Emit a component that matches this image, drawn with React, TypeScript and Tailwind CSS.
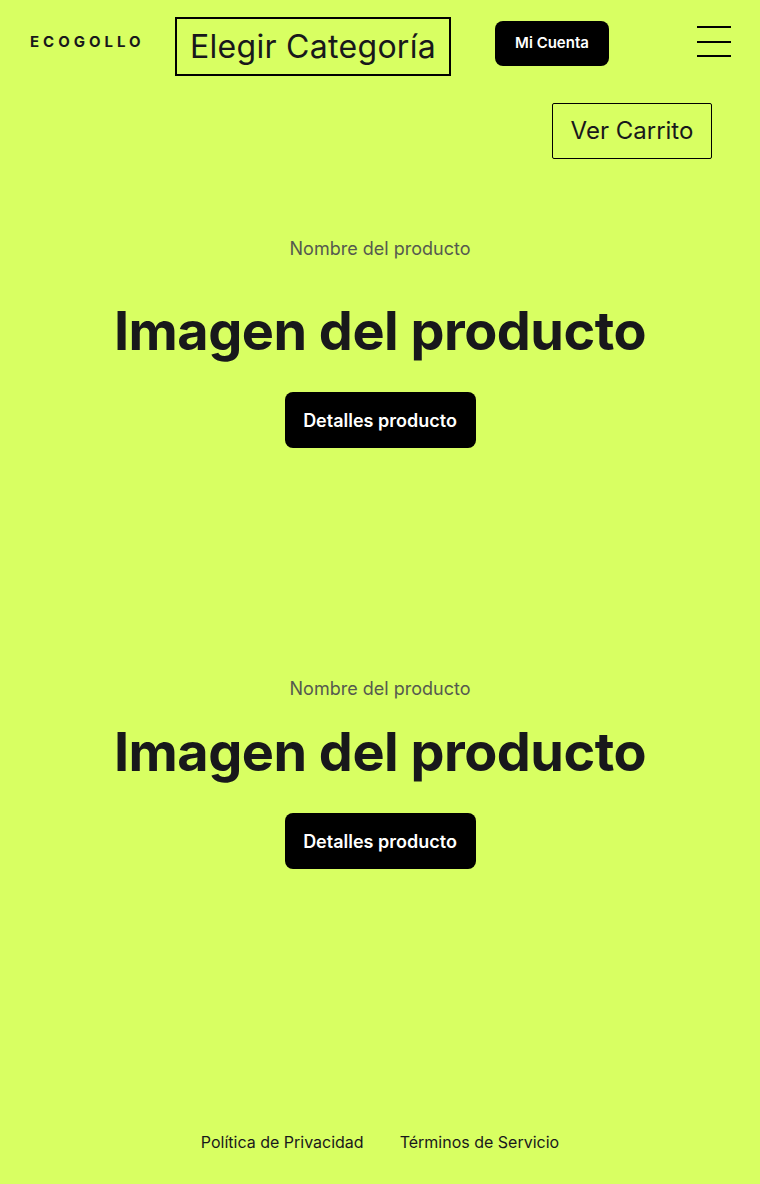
import React from "react";

const jakarta = { fontFamily: '"Inter", "Noto Sans", sans-serif' };

function Product({ top, gapTitle }: { top: string; gapTitle: string }) {
  return (
    <section className={`flex flex-col items-center ${top}`}>
      <p className="text-[18px] leading-[22px] text-[#555a4f]" style={{ fontFamily: '"Inter", sans-serif' }}>
        Nombre del producto
      </p>
      <h2 className={`${gapTitle} text-[54px] leading-[64px] font-bold tracking-[-0.5px] text-[#18181b]`}>
        Imagen del producto
      </h2>
      <button className="mt-[29px] h-[56px] w-[191px] rounded-[8px] bg-black text-[18px] font-semibold text-white">
        Detalles producto
      </button>
    </section>
  );
}

export default function App() {
  return (
    <div className="min-h-[1184px] w-[760px] bg-[#d8ff62] flex flex-col" style={jakarta}>
      <header className="flex items-start pt-[17px]">
        <div className="ml-[30px] mt-[17px] w-[115px] text-[15px] leading-[16px] font-bold tracking-[4px] text-[#18181b] whitespace-nowrap">ECOGOLLO</div>
        <div className="ml-[30px] flex h-[59px] w-[276px] items-center justify-center border-2 border-black text-[32px] tracking-[0.3px] text-[#18181b]">
          Elegir Categoría
        </div>
        <button className="ml-[44px] mt-[4px] h-[45px] w-[114px] rounded-[8px] bg-black text-[15px] font-semibold text-white">
          Mi Cuenta
        </button>
        <div className="ml-[88px] mt-[9px] flex w-[34px] flex-col gap-[12.5px]">
          <span className="block h-[2px] bg-black" />
          <span className="block h-[2px] bg-black" />
          <span className="block h-[2px] bg-black" />
        </div>
      </header>
      <div className="flex justify-end pr-[48px] pt-[27px]">
        <div className="flex h-[56px] w-[160px] items-center justify-center rounded-[2px] border border-black text-[24px] text-[#18181b]">
          Ver Carrito
        </div>
      </div>
      <Product top="mt-[79px]" gapTitle="mt-[39px]" />
      <Product top="mt-[230px]" gapTitle="mt-[20px]" />
      <footer className="mt-auto flex justify-center gap-[36px] pb-[30px] text-[16px] text-[#18181b]">
        <a>Política de Privacidad</a>
        <a>Términos de Servicio</a>
      </footer>
    </div>
  );
}
